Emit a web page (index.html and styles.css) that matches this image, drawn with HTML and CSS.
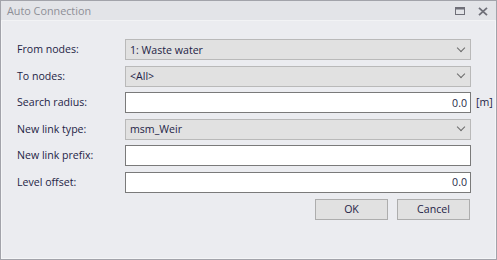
FILE: index.html
```html
<!DOCTYPE html>
<html lang="en">
<head>
  <meta charset="UTF-8">
  <title>Auto Connection</title>
  <link rel="stylesheet" href="styles.css">
</head>
<body>

<div class="window">
  <div class="titlebar">
    <span class="title">Auto Connection</span>
    <span class="tb-buttons">
      <svg class="tb-max" width="10" height="8" viewBox="0 0 10 8">
        <rect x="0.5" y="0.5" width="9" height="7" fill="none" stroke="#6f6f78" stroke-width="1"/>
        <rect x="0" y="0" width="10" height="2.5" fill="#6f6f78"/>
      </svg>
      <svg class="tb-close" width="10" height="9" viewBox="0 0 10 9">
        <path d="M1 0.8 L9 8.2 M9 0.8 L1 8.2" stroke="#6f6f78" stroke-width="1.8" fill="none"/>
      </svg>
    </span>
  </div>

  <div class="content">
    <div class="form">
      <label>From nodes:</label>
      <div class="combo"><span>1: Waste water</span><i class="chev"></i></div>
      <span></span>

      <label>To nodes:</label>
      <div class="combo"><span>&lt;All&gt;</span><i class="chev"></i></div>
      <span></span>

      <label>Search radius:</label>
      <div class="textbox num">0.0</div>
      <span class="unit">[m]</span>

      <label>New link type:</label>
      <div class="combo"><span>msm_Weir</span><i class="chev"></i></div>
      <span></span>

      <label>New link prefix:</label>
      <div class="textbox"></div>
      <span></span>

      <label>Level offset:</label>
      <div class="textbox num">0.0</div>
      <span></span>
    </div>

    <div class="buttons">
      <button>OK</button>
      <button>Cancel</button>
    </div>
  </div>
</div>

</body>
</html>
```

FILE: styles.css
```css
html, body {
  margin: 0;
  padding: 0;
}
body {
  font-family: "Open Sans", "Noto Sans", sans-serif;
  font-size: 10.6px;
  color: #1e1e46;
  background: #ebecf0;
}
.window {
  width: 497px;
  height: 260px;
  box-sizing: border-box;
  border: 1px solid #a2a3aa;
  background: #ebecf0;
  display: flex;
  flex-direction: column;
}
.titlebar {
  height: 19px;
  background: #e3e4e8;
  border-bottom: 1px solid #f2f3f5;
  display: flex;
  align-items: center;
  justify-content: space-between;
  padding: 0 8px 0 6px;
}
.title {
  color: #8d8e96;
  font-size: 10.8px;
}
.tb-buttons {
  display: flex;
  align-items: center;
  gap: 13px;
  padding-top: 1px;
}
.tb-max, .tb-close {
  display: block;
}
.content {
  flex: 1;
  padding: 18px 0 0 15px;
  border-right: 1px solid #f4f5f7;
  border-bottom: 1px solid #f4f5f7;
  border-left: 1px solid #f4f5f7;
}
.form {
  display: grid;
  grid-template-columns: 108px 346px auto;
  grid-auto-rows: 26.6px;
  align-items: start;
}
.form label {
  line-height: 21px;
}
.combo, .textbox {
  box-sizing: border-box;
  height: 21px;
  display: flex;
  align-items: center;
}
.combo {
  background: #e1e1e1;
  border: 1px solid #b9b9b9;
  padding: 0 6px 0 4px;
  justify-content: space-between;
}
.chev {
  width: 5px;
  height: 5px;
  border-right: 1px solid #6a6a6a;
  border-bottom: 1px solid #6a6a6a;
  transform: translateY(-2px) rotate(45deg);
}
.textbox {
  background: #fff;
  border: 1px solid #7a7a7a;
  padding: 0 3px;
}
.num {
  justify-content: flex-end;
}
.unit {
  line-height: 21px;
  padding-left: 5px;
}
.buttons {
  display: flex;
  gap: 9px;
  width: 453px;
  justify-content: flex-end;
}
.buttons button {
  width: 73px;
  height: 21px;
  background: #e1e1e1;
  border: 1px solid #adadad;
  font-family: inherit;
  font-size: 10.6px;
  color: #1e1e46;
  padding: 0;
}
```
